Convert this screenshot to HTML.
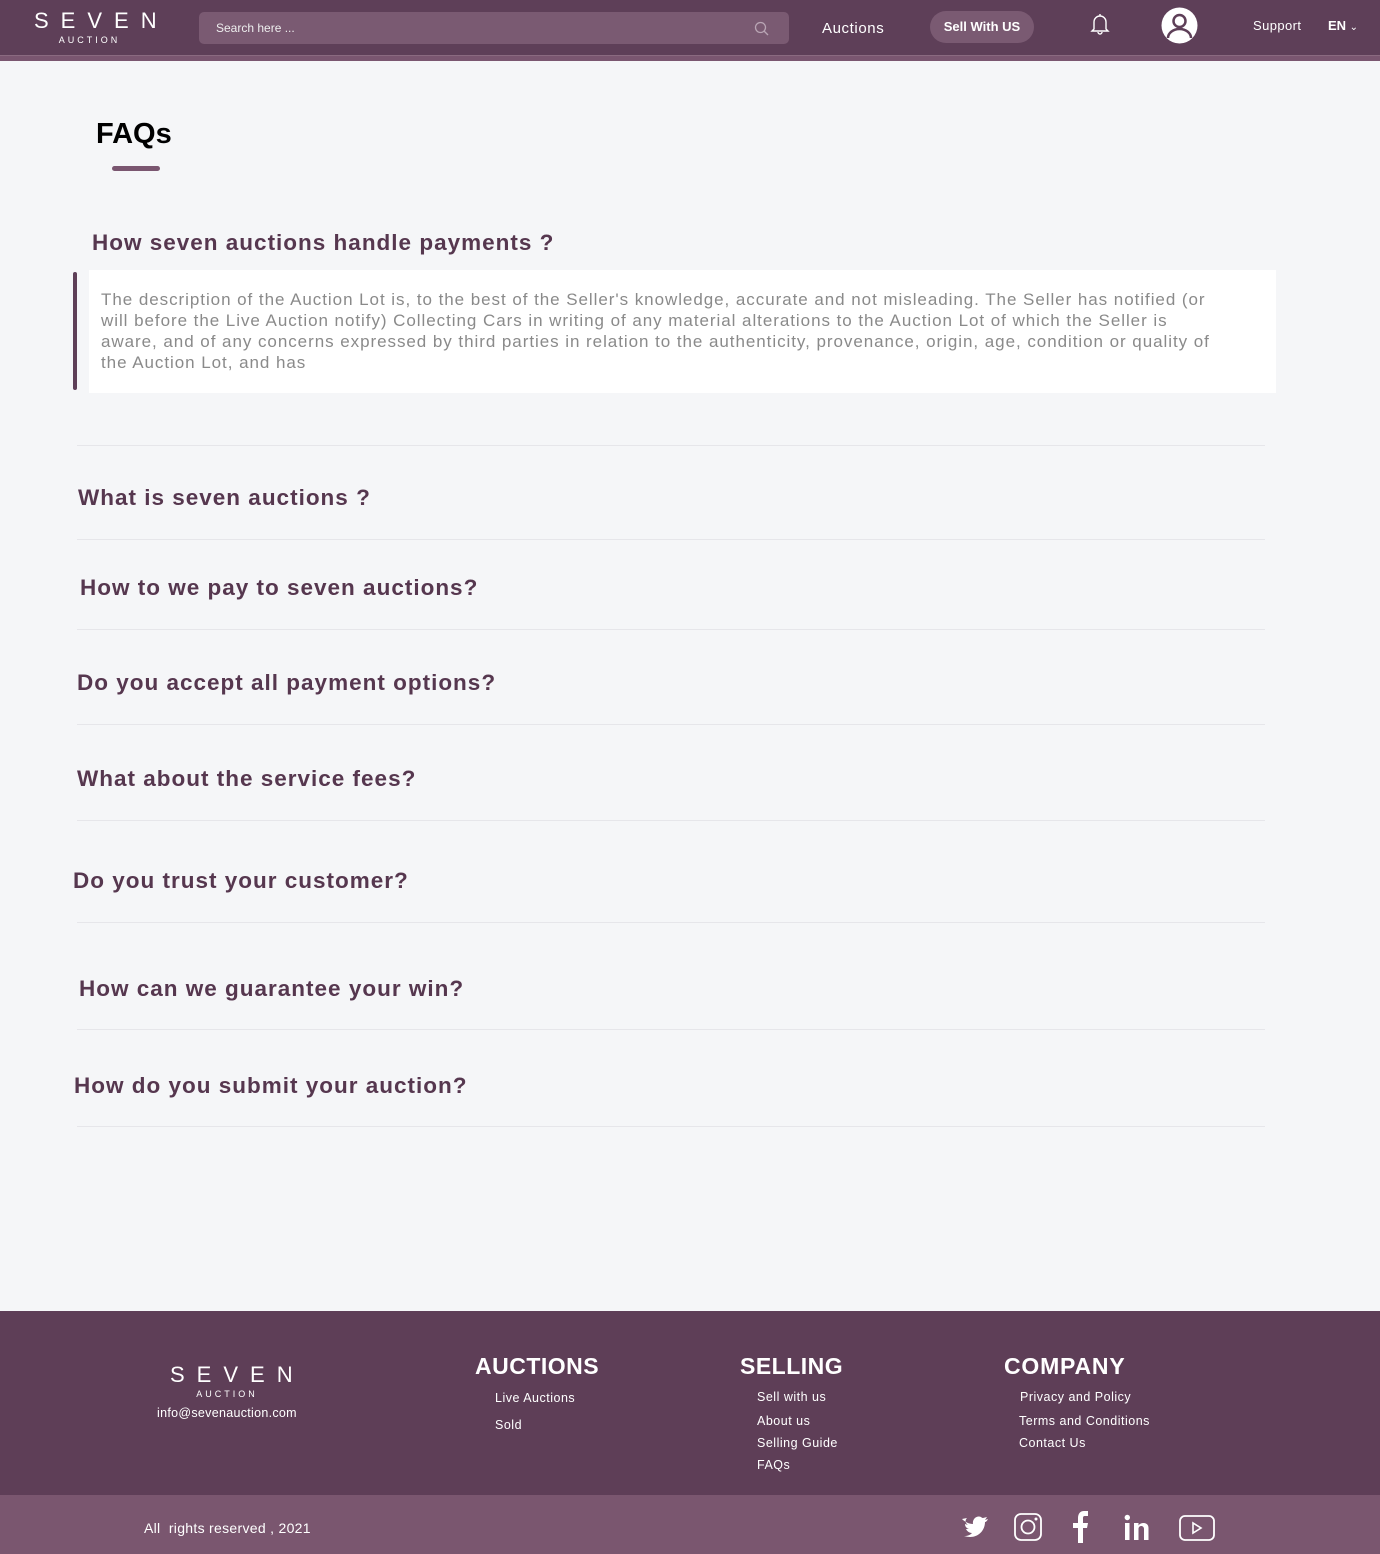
<!DOCTYPE html>
<html><head><meta charset="utf-8"><style>
*{margin:0;padding:0;box-sizing:border-box}
body{width:1380px;height:1554px;background:#f5f6f8;font-family:"Liberation Sans",sans-serif;position:relative;overflow:hidden}
.abs{position:absolute}
header{position:absolute;left:0;top:0;width:1380px;height:55px;background:#5e3f58}
.strip{position:absolute;left:0;top:55px;width:1380px;height:6px;background:#7a5670;border-top:1px solid #8a6a80}
.logo{color:#fff;text-align:center}
.logo .big{font-size:22px;letter-spacing:12px;font-weight:400;padding-left:12px}
.logo .small{font-size:9px;letter-spacing:3px}
.q{position:absolute;color:#56374f;font-size:22.5px;font-weight:bold;letter-spacing:1px}
.line{position:absolute;left:77px;width:1188px;height:1px;background:#e6e6ea}
.ft{color:#fff;font-size:12.5px;position:absolute;letter-spacing:0.5px}
.fh{color:#fff;font-size:23px;font-weight:bold;position:absolute;letter-spacing:0.5px}
</style></head><body>
<header>
 <div class="abs logo" style="left:22px;top:8px;width:135px"><div class="big">SEVEN</div><div class="small" style="margin-top:1px">AUCTION</div></div>
 <div class="abs" style="left:199px;top:12px;width:590px;height:32px;background:#7a5a72;border-radius:5px;color:#eee;font-size:12px;padding:9px 17px">Search here ...
  <svg class="abs" style="right:20px;top:9px" width="15" height="15" viewBox="0 0 15 15"><circle cx="6.5" cy="6.5" r="5" fill="none" stroke="#b9a5b4" stroke-width="1.3"/><line x1="10" y1="10" x2="14" y2="14" stroke="#b9a5b4" stroke-width="1.3"/></svg></div>
 <div class="abs" style="left:822px;top:20px;color:#fff;font-size:15px;letter-spacing:0.6px">Auctions</div>
 <div class="abs" style="left:930px;top:11px;width:104px;height:32px;background:#7a5a72;border-radius:16px;color:#fff;font-size:13px;font-weight:bold;text-align:center;line-height:32px">Sell With US</div>
 <svg class="abs" style="left:1089px;top:12px" width="22" height="24" viewBox="0 0 22 24"><path d="M11 2v2M5 17V10a6 6 0 0112 0v7l2 2H3z M9 20a2 2 0 004 0" fill="none" stroke="#fff" stroke-width="1.4"/></svg>
 <svg class="abs" style="left:1161px;top:7px" width="37" height="37" viewBox="0 0 37 37"><circle cx="18.5" cy="18.5" r="18" fill="#fff"/><circle cx="18.5" cy="14" r="6" fill="none" stroke="#5e3f58" stroke-width="2.5"/><path d="M7 31a11.5 9 0 0123 0" fill="none" stroke="#5e3f58" stroke-width="2.5"/></svg>
 <div class="abs" style="left:1253px;top:18px;color:#fff;font-size:13px;letter-spacing:0.4px">Support</div>
 <div class="abs" style="left:1328px;top:18px;color:#fff;font-size:13px;font-weight:bold">EN <span style="font-weight:normal;font-size:10px">&#8964;</span></div>
</header>
<div class="strip"></div>

<div class="abs" style="left:96px;top:118px;font-size:29px;font-weight:bold;color:#000">FAQs</div>
<div class="abs" style="left:112px;top:166px;width:48px;height:5px;border-radius:3px;background:#7a5670"></div>

<div class="q" style="left:92px;top:230px">How seven auctions handle payments ?</div>
<div class="abs" style="left:73px;top:272px;width:4px;height:118px;background:#5e3f58;border-radius:2px"></div>
<div class="abs" style="left:89px;top:270px;width:1187px;height:123px;background:#fff"></div>
<div class="abs" style="left:101px;top:289px;color:#8a8a8a;font-size:17px;line-height:21px;letter-spacing:0.95px;white-space:nowrap">The description of the Auction Lot is, to the best of the Seller's knowledge, accurate and not misleading. The Seller has notified (or<br>will before the Live Auction notify) Collecting Cars in writing of any material alterations to the Auction Lot of which the Seller is<br>aware, and of any concerns expressed by third parties in relation to the authenticity, provenance, origin, age, condition or quality of<br>the Auction Lot, and has</div>

<div class="line" style="top:445px"></div>
<div class="q" style="left:78px;top:485px">What is seven auctions ?</div>
<div class="line" style="top:539px"></div>
<div class="q" style="left:80px;top:575px">How to we pay to seven auctions?</div>
<div class="line" style="top:629px"></div>
<div class="q" style="left:77px;top:670px">Do you accept all payment options?</div>
<div class="line" style="top:724px"></div>
<div class="q" style="left:77px;top:766px">What about the service fees?</div>
<div class="line" style="top:820px"></div>
<div class="q" style="left:73px;top:868px">Do you trust your customer?</div>
<div class="line" style="top:922px"></div>
<div class="q" style="left:79px;top:976px">How can we guarantee your win?</div>
<div class="line" style="top:1029px"></div>
<div class="q" style="left:74px;top:1073px">How do you submit your auction?</div>
<div class="line" style="top:1126px"></div>

<div class="abs" style="left:0;top:1311px;width:1380px;height:184px;background:#5e3e57"></div>
<div class="abs logo" style="left:158px;top:1362px;width:138px"><div class="big" style="font-size:22px">SEVEN</div><div class="small" style="margin-top:1px">AUCTION</div></div>
<div class="ft" style="left:157px;top:1406px;letter-spacing:0.3px">info@sevenauction.com</div>
<div class="fh" style="left:475px;top:1353px">AUCTIONS</div>
<div class="ft" style="left:495px;top:1391px">Live Auctions</div>
<div class="ft" style="left:495px;top:1418px">Sold</div>
<div class="fh" style="left:740px;top:1353px">SELLING</div>
<div class="ft" style="left:757px;top:1390px">Sell with us</div>
<div class="ft" style="left:757px;top:1414px">About us</div>
<div class="ft" style="left:757px;top:1436px">Selling Guide</div>
<div class="ft" style="left:757px;top:1458px">FAQs</div>
<div class="fh" style="left:1004px;top:1353px;letter-spacing:0.8px">COMPANY</div>
<div class="ft" style="left:1020px;top:1390px">Privacy and Policy</div>
<div class="ft" style="left:1019px;top:1414px">Terms and Conditions</div>
<div class="ft" style="left:1019px;top:1436px">Contact Us</div>

<div class="abs" style="left:0;top:1495px;width:1380px;height:59px;background:#7a566f"></div>
<div class="ft" style="left:144px;top:1520px;font-size:14px;letter-spacing:0.3px">All&nbsp; rights reserved , 2021</div>
<svg class="abs" style="left:960px;top:1510px" width="260" height="34" viewBox="0 0 260 34">
 <path d="M2 9c3 3 7 5 11 5-1-5 4-9 8-7 1 1 2 1 2 1l4-1-2 3 3-1c-1 2-2 3-3 3 0 9-8 18-21 14 4 0 6-1 8-3-3 0-5-2-6-4h3c-3-1-4-3-4-5l3 1c-3-2-3-5-1-7z" fill="#fff"/>
 <rect x="55" y="4" width="26" height="26" rx="6" fill="none" stroke="#fff" stroke-width="1.8"/><circle cx="68" cy="17" r="6.5" fill="none" stroke="#fff" stroke-width="1.8"/><circle cx="76" cy="9" r="1.5" fill="#fff"/>
 <path d="M118 33V18h-5v-5h5V8c0-4 2-7 6-7h4v5h-3c-2 0-2 1-2 3v4h5l-1 5h-4v15z" fill="#fff"/>
 <rect x="165" y="13" width="4.5" height="17" fill="#fff"/><circle cx="167.3" cy="7.5" r="2.7" fill="#fff"/><path d="M174 30V13h4.5v2.5c2-3.5 10-4 10 2.5v12h-4.5V19c0-4-5.5-4-5.5 0v11z" fill="#fff"/>
 <rect x="220" y="6" width="34" height="24" rx="5" fill="none" stroke="#fff" stroke-width="1.8"/><path d="M233 13v10l8-5z" fill="none" stroke="#fff" stroke-width="1.6"/>
</svg>
</body></html>
